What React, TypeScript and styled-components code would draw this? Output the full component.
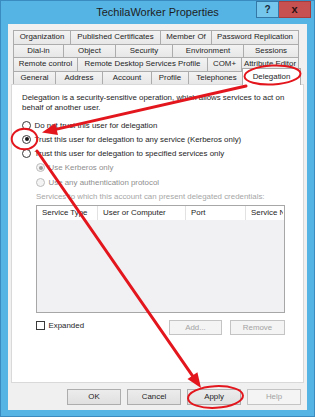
import React from 'react';
import styled, { createGlobalStyle } from 'styled-components';

const Global = createGlobalStyle`
  html, body { margin: 0; padding: 0; width: 315px; height: 417px; overflow: hidden; background: #ffffff; }
  body { font-family: "Liberation Sans", Arial, sans-serif; -webkit-font-smoothing: antialiased; }
  * { box-sizing: border-box; }
`;

const Window = styled.div`
  position: relative;
  width: 315px;
  height: 417px;
  background: #55b4e4;
  border: 1px solid #3a8cc0;
  display: flex;
  flex-direction: column;
`;

const TitleBar = styled.div`
  height: 23px;
  flex: none;
  display: grid;
  grid-template-columns: 1fr auto 1fr;
  align-items: start;
`;

const Title = styled.div`
  font-size: 11px;
  line-height: 22px;
  color: #1d1d1d;
  white-space: nowrap;
`;

const Caption = styled.div`
  justify-self: end;
  display: flex;
  margin-right: 3px;
`;

const HelpButton = styled.div`
  width: 23px;
  height: 17px;
  border: 1px solid #3478a8;
  background: #74c6ec;
  color: #1b2a38;
  font-weight: bold;
  font-size: 10px;
  line-height: 15px;
  text-align: center;
`;

const CloseButton = styled.div`
  width: 32px;
  height: 17px;
  background: #c75050;
  border: 1px solid #a83d3d;
  border-left: none;
  color: #2a1212;
  font-weight: bold;
  font-size: 11px;
  line-height: 14px;
  text-align: center;
`;

const Client = styled.div`
  flex: 1;
  margin: 0 7px 6px 7px;
  background: #f0f0f0;
  padding: 6px 3px 5px 3px;
  display: flex;
  flex-direction: column;
  font-size: 7.9px;
  color: #1e1e1e;
`;

const TabStrip = styled.div`
  padding-left: 2px;
  display: flex;
  flex-direction: column;
`;

const TabRow = styled.div`
  height: 13.5px;
  display: flex;
  align-items: stretch;
`;

const Tab = styled.div<{ $w: number; $selected?: boolean }>`
  width: ${p => p.$w}px;
  flex: none;
  border-top: 1px solid #acacac;
  border-left: 1px solid #acacac;
  background: linear-gradient(#f3f3f3, #e7e7e7);
  text-align: center;
  white-space: nowrap;
  line-height: 12.5px;
  &:last-child { border-right: 1px solid #acacac; }
  ${p => p.$selected && `
    position: relative;
    z-index: 2;
    width: ${p.$w + 4}px;
    margin: -3px -2px 0 -2px;
    height: 17.5px;
    align-self: flex-start;
    background: #ffffff;
    line-height: 15px;
  `}
`;

const Panel = styled.div`
  height: 299px;
  flex: none;
  border: 1px solid #d9d9d9;
  background: #ffffff;
  padding: 8px 18px 0 10px;
  display: flex;
  flex-direction: column;
`;

const Description = styled.div`
  width: 270px;
  line-height: 10px;
`;

const Options = styled.div`
  margin-top: 5px;
  display: flex;
  flex-direction: column;
`;

const Option = styled.div<{ $indent?: boolean; $disabled?: boolean }>`
  height: 14.25px;
  display: flex;
  align-items: center;
  gap: 3.5px;
  margin-left: ${p => (p.$indent ? 14 : 0)}px;
  color: ${p => (p.$disabled ? '#8e8e8e' : '#1e1e1e')};
  white-space: nowrap;
`;

const Radio = styled.span<{ $checked?: boolean; $disabled?: boolean }>`
  width: 9px;
  height: 9px;
  flex: none;
  border-radius: 50%;
  border: 1px solid ${p => (p.$disabled ? '#bcbcbc' : '#3a3a3a')};
  background: ${p => (p.$disabled ? '#f4f4f4' : '#ffffff')};
  display: flex;
  align-items: center;
  justify-content: center;
  &::after {
    content: '';
    display: ${p => (p.$checked ? 'block' : 'none')};
    width: 4px;
    height: 4px;
    border-radius: 50%;
    background: ${p => (p.$disabled ? '#9a9a9a' : '#1a1a1a')};
  }
`;

const Section = styled.div`
  margin-left: 14px;
  display: flex;
  flex-direction: column;
`;

const SectionLabel = styled.div`
  margin-top: 2.75px;
  line-height: 10px;
  color: #a6a6a6;
  white-space: nowrap;
`;

const ListBox = styled.div`
  margin-top: 3px;
  height: 108px;
  border: 1px solid #a7a7a7;
  background: #f1f0f2;
  display: flex;
  flex-direction: column;
  overflow: hidden;
`;

const HeaderRow = styled.div`
  height: 14px;
  background: #ffffff;
  display: flex;
`;

const HeaderCell = styled.div<{ $w?: number }>`
  width: ${p => (p.$w ? `${p.$w}px` : 'auto')};
  flex: ${p => (p.$w ? 'none' : '1')};
  padding-left: 5px;
  line-height: 13px;
  white-space: nowrap;
  overflow: hidden;
  border-right: 1px solid ${p => (p.$w ? '#e2e2e2' : 'transparent')};
`;

const ActionRow = styled.div`
  margin-top: 7px;
  height: 15px;
  display: flex;
  align-items: flex-start;
`;

const CheckLabel = styled.div`
  height: 11px;
  display: flex;
  align-items: center;
  gap: 3.5px;
  white-space: nowrap;
`;

const CheckBox = styled.span`
  width: 9px;
  height: 9px;
  border: 1px solid #3a3a3a;
  background: #ffffff;
`;

const Button = styled.div<{ $w: number; $disabled?: boolean; $small?: boolean }>`
  width: ${p => p.$w}px;
  height: ${p => (p.$small ? 15 : 16)}px;
  flex: none;
  border: 1px solid ${p => (p.$disabled ? '#c4c4c4' : '#adadad')};
  background: ${p => (p.$disabled ? '#f4f4f4' : 'linear-gradient(#ececec, #e0e0e0)')};
  color: ${p => (p.$disabled ? '#a3a3a3' : '#1e1e1e')};
  text-align: center;
  line-height: ${p => (p.$small ? 13 : 14)}px;
  white-space: nowrap;
`;

const SmallButtons = styled.div`
  margin-left: auto;
  display: flex;
  gap: 8px;
`;

const DialogButtons = styled.div`
  margin-top: 6px;
  padding-right: 3px;
  display: flex;
  justify-content: flex-end;
  gap: 6px;
`;

const Overlay = styled.svg`
  position: absolute;
  top: -1px;
  left: -1px;
  width: 315px;
  height: 417px;
  pointer-events: none;
  z-index: 10;
`;

const TABS: { label: string; w: number; selected?: boolean }[][] = [
  [
    { label: 'Organization', w: 57 },
    { label: 'Published Certificates', w: 90 },
    { label: 'Member Of', w: 51 },
    { label: 'Password Replication', w: 88 },
  ],
  [
    { label: 'Dial-in', w: 50 },
    { label: 'Object', w: 52 },
    { label: 'Security', w: 57 },
    { label: 'Environment', w: 71 },
    { label: 'Sessions', w: 56 },
  ],
  [
    { label: 'Remote control', w: 64 },
    { label: 'Remote Desktop Services Profile', w: 130 },
    { label: 'COM+', w: 34 },
    { label: 'Attribute Editor', w: 58 },
  ],
  [
    { label: 'General', w: 42 },
    { label: 'Address', w: 47 },
    { label: 'Account', w: 49 },
    { label: 'Profile', w: 37 },
    { label: 'Telephones', w: 56 },
    { label: 'Delegation', w: 55, selected: true },
  ],
];

const RED = '#e3161d';

function Arrow({ x1, y1, x2, y2 }: { x1: number; y1: number; x2: number; y2: number }) {
  const dx = x2 - x1;
  const dy = y2 - y1;
  const L = Math.hypot(dx, dy);
  const ux = dx / L;
  const uy = dy / L;
  const len = 15;
  const half = 6;
  const bx = x2 - ux * len;
  const by = y2 - uy * len;
  const px = -uy * half;
  const py = ux * half;
  return (
    <g>
      <line x1={x1} y1={y1} x2={bx + ux * 2} y2={by + uy * 2} stroke={RED} strokeWidth={3} strokeLinecap="round" />
      <polygon points={`${x2},${y2} ${bx + px},${by + py} ${bx - px},${by - py}`} fill={RED} />
    </g>
  );
}

export default function App() {
  return (
    <>
      <Global />
      <Window>
        <TitleBar>
          <span />
          <Title>TechilaWorker Properties</Title>
          <Caption>
            <HelpButton>?</HelpButton>
            <CloseButton>x</CloseButton>
          </Caption>
        </TitleBar>
        <Client>
          <TabStrip>
            {TABS.map((row, i) => (
              <TabRow key={i}>
                {row.map(t => (
                  <Tab key={t.label} $w={t.w} $selected={t.selected}>
                    {t.label}
                  </Tab>
                ))}
              </TabRow>
            ))}
          </TabStrip>
          <Panel>
            <Description>
              Delegation is a security-sensitive operation, which allows services to act on behalf of another user.
            </Description>
            <Options>
              <Option>
                <Radio />
                Do not trust this user for delegation
              </Option>
              <Option>
                <Radio $checked />
                Trust this user for delegation to any service (Kerberos only)
              </Option>
              <Option>
                <Radio />
                Trust this user for delegation to specified services only
              </Option>
              <Option $indent $disabled>
                <Radio $checked $disabled />
                Use Kerberos only
              </Option>
              <Option $indent $disabled>
                <Radio $disabled />
                Use any authentication protocol
              </Option>
            </Options>
            <Section>
              <SectionLabel>Services to which this account can present delegated credentials:</SectionLabel>
              <ListBox>
                <HeaderRow>
                  <HeaderCell $w={61}>Service Type</HeaderCell>
                  <HeaderCell $w={88}>User or Computer</HeaderCell>
                  <HeaderCell $w={60}>Port</HeaderCell>
                  <HeaderCell>Service Name</HeaderCell>
                </HeaderRow>
              </ListBox>
              <ActionRow>
                <CheckLabel>
                  <CheckBox />
                  Expanded
                </CheckLabel>
                <SmallButtons>
                  <Button $w={53} $disabled $small>Add...</Button>
                  <Button $w={55} $disabled $small>Remove</Button>
                </SmallButtons>
              </ActionRow>
            </Section>
          </Panel>
          <DialogButtons>
            <Button $w={54}>OK</Button>
            <Button $w={54}>Cancel</Button>
            <Button $w={54}>Apply</Button>
            <Button $w={54} $disabled>Help</Button>
          </DialogButtons>
        </Client>
        <Overlay viewBox="0 0 315 417">
          <ellipse cx={272.5} cy={75} rx={28} ry={9.5} fill="none" stroke={RED} strokeWidth={2} transform="rotate(-3 272.5 75)" />
          <ellipse cx={24.5} cy={139} rx={12.8} ry={10.3} fill="none" stroke={RED} strokeWidth={2} />
          <ellipse cx={215.5} cy={397} rx={27.5} ry={10.8} fill="none" stroke={RED} strokeWidth={2} transform="rotate(-3 215.5 397)" />
          <Arrow x1={246} y1={86} x2={42} y2={132.5} />
          <Arrow x1={37} y1={151} x2={201} y2={388} />
        </Overlay>
      </Window>
    </>
  );
}
